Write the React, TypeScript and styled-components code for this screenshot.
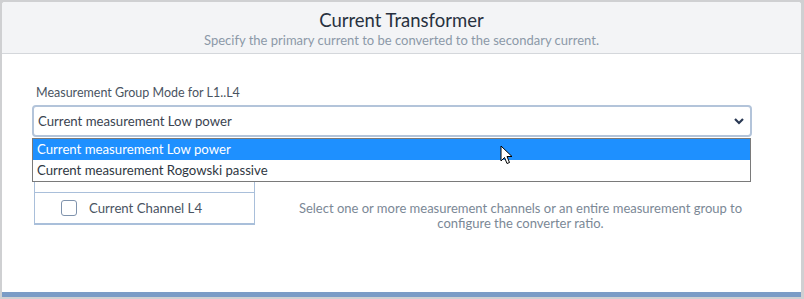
import React from "react";
import styled, { createGlobalStyle } from "styled-components";

const Global = createGlobalStyle`
  html, body { margin: 0; padding: 0; background: #cfd0d2; }
  body { font-family: "Lato", "Open Sans", sans-serif; }
  * { box-sizing: border-box; }
`;

const Page = styled.div`
  width: 804px;
  height: 299px;
  padding: 2px 3px 2px 2px;
  background: #cfd0d2;
`;

const Card = styled.div`
  width: 799px;
  height: 295px;
  background: #ffffff;
  border-radius: 3px 3px 0 0;
  display: flex;
  flex-direction: column;
  overflow: hidden;
`;

const Header = styled.div`
  height: 52px;
  background: #f3f4f6;
  border-bottom: 1px solid #d4d7db;
  display: flex;
  flex-direction: column;
  align-items: center;
  padding-top: 7px;
`;

const Title = styled.div`
  font-size: 18.5px;
  line-height: 22px;
  color: #28313f;
`;

const Subtitle = styled.div`
  font-size: 13px;
  line-height: 17px;
  color: #8c99a8;
  margin-top: 1px;
`;

const Body = styled.div`
  flex: 1;
  padding: 31px 49px 0 30px;
  position: relative;
`;

const Label = styled.div`
  font-size: 12.5px;
  line-height: 16px;
  color: #4a5462;
  padding-left: 4px;
`;

const SelectWrap = styled.div`
  position: relative;
  margin-top: 4px;
`;

const Select = styled.div`
  height: 32px;
  border: 2px solid #b3c4da;
  border-radius: 4px;
  display: flex;
  align-items: center;
  justify-content: space-between;
  padding: 0 4px 0 4px;
  font-size: 13.2px;
  color: #3a4350;
`;

const Menu = styled.div`
  position: absolute;
  left: 0;
  right: 1px;
  top: 33px;
  background: #fff;
  border: 1px solid #7a7a7a;
  z-index: 2;
`;

const Option = styled.div<{ $active?: boolean }>`
  height: 21px;
  line-height: 21px;
  padding-left: 4px;
  font-size: 13.2px;
  background: ${(p) => (p.$active ? "#1e90ff" : "#fff")};
  color: ${(p) => (p.$active ? "#ffffff" : "#2f3742")};
`;

const Row = styled.div`
  display: flex;
  align-items: flex-start;
  margin-top: 11px;
  padding-left: 2px;
`;

const ChannelBox = styled.div`
  width: 221px;
  border: 1px solid #a9bfda;
  border-bottom-width: 2px;
`;

const GroupRow = styled.div`
  height: 43px;
`;

const ChannelRow = styled.div`
  height: 31px;
  display: flex;
  align-items: center;
  padding-left: 26px;
  font-size: 13.2px;
  color: #4a5462;
  border-top: 1px solid #a9bfda;
`;

const Check = styled.span`
  width: 16px;
  height: 16px;
  border: 1.5px solid #7f93ad;
  border-radius: 3px;
  margin-right: 12px;
  background: #fff;
`;

const Hint = styled.div`
  flex: 1;
  margin-left: 34px;
  padding-top: 53px;
  text-align: center;
  font-size: 13px;
  line-height: 15px;
  color: #7b8896;
`;

const BottomBar = styled.div`
  height: 5px;
  background: #7b9cc6;
`;

const Cursor = styled.svg`
  position: absolute;
  left: 498px;
  top: 91px;
  z-index: 3;
`;

export default function App() {
  return (
    <Page>
      <Global />
      <Card>
        <Header>
          <Title>Current Transformer</Title>
          <Subtitle>Specify the primary current to be converted to the secondary current.</Subtitle>
        </Header>
        <Body>
          <Label>Measurement Group Mode for L1..L4</Label>
          <SelectWrap>
            <Select>
              <span>Current measurement Low power</span>
              <svg width="14" height="10" viewBox="0 0 14 10">
                <polyline points="3,3 7,7 11,3" fill="none" stroke="#2a3954" strokeWidth="2.2" />
              </svg>
            </Select>
            <Menu>
              <Option $active>Current measurement Low power</Option>
              <Option>Current measurement Rogowski passive</Option>
            </Menu>
          </SelectWrap>
          <Row>
            <ChannelBox>
              <GroupRow />
              <ChannelRow>
                <Check />
                Current Channel L4
              </ChannelRow>
            </ChannelBox>
            <Hint>
              Select one or more measurement channels or an entire measurement group to
              <br />
              configure the converter ratio.
            </Hint>
          </Row>
          <Cursor width="13" height="20" viewBox="0 0 13 20">
            <path d="M1 1 L1 16 L4.5 12.5 L7 18.5 L9.5 17.5 L7 11.5 L12 11.5 Z" fill="#fff" stroke="#000" strokeWidth="1" strokeLinejoin="round" />
          </Cursor>
        </Body>
        <BottomBar />
      </Card>
    </Page>
  );
}
